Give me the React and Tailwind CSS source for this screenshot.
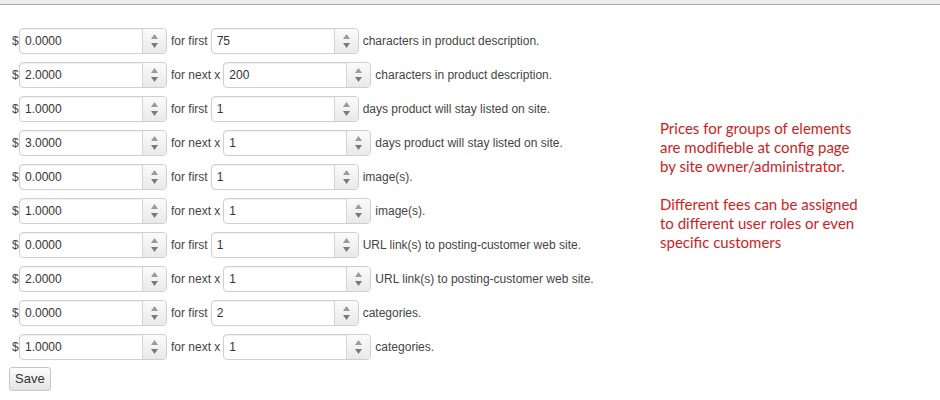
import React from 'react';

const rows = [
  { price: '0.0000', next: false, qty: '75', label: 'characters in product description.' },
  { price: '2.0000', next: true, qty: '200', label: 'characters in product description.' },
  { price: '1.0000', next: false, qty: '1', label: 'days product will stay listed on site.' },
  { price: '3.0000', next: true, qty: '1', label: 'days product will stay listed on site.' },
  { price: '0.0000', next: false, qty: '1', label: 'image(s).' },
  { price: '1.0000', next: true, qty: '1', label: 'image(s).' },
  { price: '0.0000', next: false, qty: '1', label: 'URL link(s) to posting-customer web site.' },
  { price: '2.0000', next: true, qty: '1', label: 'URL link(s) to posting-customer web site.' },
  { price: '0.0000', next: false, qty: '2', label: 'categories.' },
  { price: '1.0000', next: true, qty: '1', label: 'categories.' },
];

function Spinner() {
  return (
    <div className="w-6 h-full flex flex-col items-center justify-center gap-[4px] border-l border-[#d4d4d4] bg-gradient-to-b from-[#fbfbfb] to-[#e9e9e9] rounded-r-[4px]">
      <svg width="7" height="5" viewBox="0 0 7 5"><path d="M3.5 0 L7 5 L0 5 Z" fill="#9a9a9a" /></svg>
      <svg width="7" height="5" viewBox="0 0 7 5"><path d="M0 0 L7 0 L3.5 5 Z" fill="#7a7a7a" /></svg>
    </div>
  );
}

function NumberBox({ value }) {
  return (
    <div className="w-[148px] h-[26px] flex items-center border border-[#cfcfcf] rounded-[4px] bg-white shadow-[inset_0_1px_1px_rgba(0,0,0,0.06)]">
      <div className="flex-1 pl-[5px] text-[12px] text-[#333]">{value}</div>
      <Spinner />
    </div>
  );
}

export default function App() {
  return (
    <div className="w-[940px] h-[400px] bg-white font-['Liberation_Sans',_Arial,_sans-serif] overflow-hidden">
      <div className="h-[5px] bg-[#eaedeb] border-b border-[#a7aeaa]" />

      <div className="flex pt-[23px] pl-[9px]">
        <div className="w-[651px] flex flex-col">
          <div className="flex flex-col gap-[8px] pl-[3px]">
            {rows.map((r, i) => (
              <div key={i} className="flex items-center text-[12px] text-[#444]">
                <span className="w-[7px]">$</span>
                <NumberBox value={r.price} />
                <span className="ml-[4px] mr-[3px]">
                  {r.next ? 'for next x' : 'for first'}
                </span>
                <NumberBox value={r.qty} />
                <span className="ml-[4px]">{r.label}</span>
              </div>
            ))}
          </div>

          <div className="mt-[6px]">
            <button className="h-[24px] px-[5px] text-[13px] text-[#333] border border-[#c6c6c6] rounded-[3px] bg-gradient-to-b from-[#fdfdfd] to-[#e4e4e4]">
              Save
            </button>
          </div>
        </div>

        <div className="pt-[91px] text-[15px] leading-[19px] text-[#cf1d24] font-['Lato',_sans-serif]">
          <p>Prices for groups of elements</p>
          <p>are modifieble at config page</p>
          <p>by site owner/administrator.</p>
          <p className="mt-[19px]">Different fees can be assigned</p>
          <p>to different user roles or even</p>
          <p>specific customers</p>
        </div>
      </div>
    </div>
  );
}
